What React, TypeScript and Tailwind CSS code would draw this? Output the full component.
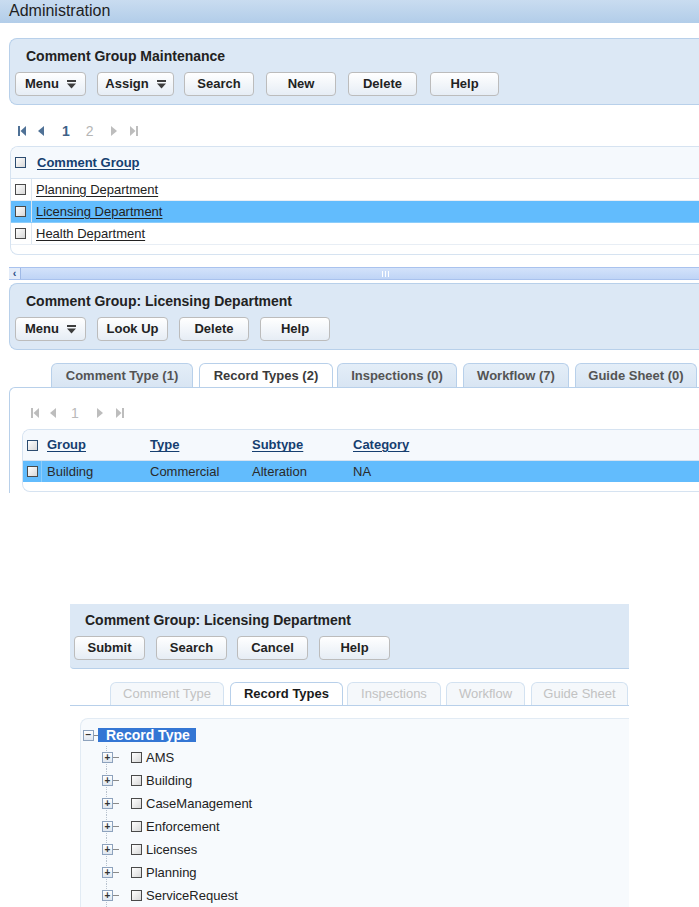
import React from "react";

function MenuGlyph() {
  return (
    <svg width="9" height="9" viewBox="0 0 9 9">
      <rect x="0" y="0" width="9" height="2" fill="#3d3d3d" />
      <polygon points="0,3.5 9,3.5 4.5,8.5" fill="#3d3d3d" />
    </svg>
  );
}

function Btn({ label, w, menu }: { label: string; w: string; menu?: boolean }) {
  return (
    <div
      className={`${w} h-[24px] flex items-center justify-center gap-[8px] rounded-[4px] border border-[#bcbcbc] bg-linear-to-b from-white to-[#e6edf5] text-[13px] font-bold text-[#222]`}
    >
      <span>{label}</span>
      {menu && <MenuGlyph />}
    </div>
  );
}

function Check({ blue }: { blue?: boolean }) {
  return (
    <span
      className={`block w-[11px] h-[11px] border ${blue ? "border-[#2c4c70]" : "border-[#4a4a4a]"} bg-linear-to-br from-white to-[#d8d8d8]`}
    />
  );
}

function PagerIcon({ kind, color }: { kind: "first" | "prev" | "next" | "last"; color: string }) {
  return (
    <svg width="8" height="10" viewBox="0 0 8 10">
      {kind === "first" && (
        <>
          <rect x="0" y="0" width="2" height="10" fill={color} />
          <polygon points="8,0 8,10 2.5,5" fill={color} />
        </>
      )}
      {kind === "prev" && <polygon points="7,0 7,10 1,5" fill={color} />}
      {kind === "next" && <polygon points="1,0 1,10 7,5" fill={color} />}
      {kind === "last" && (
        <>
          <polygon points="0,0 0,10 5.5,5" fill={color} />
          <rect x="6" y="0" width="2" height="10" fill={color} />
        </>
      )}
    </svg>
  );
}

function Panel({
  title,
  children,
}: {
  title: string;
  children: React.ReactNode;
}) {
  return (
    <div className="ml-[9px] h-[67px] bg-[#dce8f5] border border-r-0 border-[#b8d0ea] rounded-l-[8px]">
      <div className="pl-[16px] pt-[9px] text-[14px] leading-[16px] font-bold text-[#222]">{title}</div>
      <div className="flex mt-[8px] pl-[5px]">{children}</div>
    </div>
  );
}

function Tab({ label, w, active }: { label: string; w: string; active?: boolean }) {
  return (
    <div
      className={`${w} h-[24px] flex items-center justify-center rounded-t-[6px] border border-b-0 border-[#b8d0ea] text-[13px] font-bold ${
        active ? "bg-white text-[#3a3a3a]" : "bg-linear-to-b from-[#e4eef8] to-[#d8e5f3] text-[#545454]"
      }`}
    >
      {label}
    </div>
  );
}

function Tab2({ label, w, active }: { label: string; w: string; active?: boolean }) {
  return (
    <div
      className={`${w} h-[23px] flex items-center justify-center rounded-t-[6px] border border-b-0 text-[13px] ${
        active
          ? "bg-white border-[#b8d0ea] font-bold text-[#1a1a1a]"
          : "bg-[#f5f8fb] border-[#d3e2f1] text-[#c2c2c2]"
      }`}
    >
      {label}
    </div>
  );
}

function PlusBox({ minus }: { minus?: boolean }) {
  return (
    <span className="relative flex items-center justify-center w-[11px] h-[11px] border border-[#8da2bd] bg-linear-to-b from-white to-[#dfe6ef] text-[10px] leading-none font-bold text-[#333]">
      {minus ? "−" : "+"}
    </span>
  );
}

const groups = ["Planning Department", "Licensing Department", "Health Department"];
const recordTypes = ["AMS", "Building", "CaseManagement", "Enforcement", "Licenses", "Planning", "ServiceRequest"];

export default function App() {
  return (
    <div className="w-[699px] min-h-[907px] overflow-hidden bg-white font-['Liberation_Sans',Arial,sans-serif] text-[#222]">
      {/* page header */}
      <div className="h-[23px] bg-linear-to-b from-[#c9dcf0] to-[#b2cde9] pl-[9px] text-[16px] leading-[21px] text-[#1e1e1e]">
        Administration
      </div>

      <div className="h-[15px]" />

      <Panel title="Comment Group Maintenance">
        <Btn label="Menu" w="w-[71px]" menu />
        <div className="ml-[11px]"><Btn label="Assign" w="w-[77px]" menu /></div>
        <div className="ml-[10px]"><Btn label="Search" w="w-[70px]" /></div>
        <div className="ml-[12px]"><Btn label="New" w="w-[70px]" /></div>
        <div className="ml-[12px]"><Btn label="Delete" w="w-[69px]" /></div>
        <div className="ml-[13px]"><Btn label="Help" w="w-[69px]" /></div>
      </Panel>

      {/* pager */}
      <div className="flex items-center h-[14px] mt-[19px] mb-[8px] pl-[18px] text-[14px] font-bold">
        <PagerIcon kind="first" color="#4f7196" />
        <span className="ml-[11px]"><PagerIcon kind="prev" color="#4f7196" /></span>
        <span className="ml-[17px] text-[#3d6187]">1</span>
        <span className="ml-[16px] text-[#b5b5b5] font-normal">2</span>
        <span className="ml-[16px]"><PagerIcon kind="next" color="#bdbdbd" /></span>
        <span className="ml-[12px]"><PagerIcon kind="last" color="#bdbdbd" /></span>
      </div>

      {/* comment group table */}
      <div className="ml-[10px] border border-r-0 border-[#d6e3f1] rounded-l-[8px] overflow-hidden">
        <div className="h-[32px] bg-[#f5f9fd] border-b border-[#d6e3f1] flex items-center">
          <div className="w-[21px] pl-[4px]"><Check blue /></div>
          <div className="pl-[5px] text-[13px] font-bold text-[#163f70] underline underline-offset-2">Comment Group</div>
        </div>
        {groups.map((g) => (
          <div
            key={g}
            className={`h-[22px] flex border-b ${g === "Licensing Department" ? "bg-[#62bcfd] border-[#8ccdfb]" : "bg-white border-[#e8eef5]"}`}
          >
            <div className="w-[21px] pl-[4px] flex items-center border-r border-[#dce6f0]"><Check /></div>
            <div className="pl-[4px] flex items-center text-[13px] text-[#222] underline underline-offset-2">{g}</div>
          </div>
        ))}
        <div className="h-[9px]" />
      </div>

      <div className="h-[12px]" />

      {/* horizontal scrollbar */}
      <div className="ml-[9px] h-[13px] flex border-y border-[#a9c2ee]">
        <div className="w-[12px] flex items-center justify-center bg-[#e3ecf9] border-r border-[#9fb9e6] text-[11px] leading-none font-bold text-[#2a4d86]">‹</div>
        <div className="flex-1 flex items-center justify-center bg-linear-to-b from-[#d3e2fa] to-[#bfd4f6] pl-[50px]">
          <div className="flex gap-[2px]">
            <span className="w-px h-[6px] bg-white" />
            <span className="w-px h-[6px] bg-white" />
            <span className="w-px h-[6px] bg-white" />
          </div>
        </div>
      </div>

      <div className="h-[3px]" />

      <Panel title="Comment Group: Licensing Department">
        <Btn label="Menu" w="w-[71px]" menu />
        <div className="ml-[11px]"><Btn label="Look Up" w="w-[71px]" /></div>
        <div className="ml-[11px]"><Btn label="Delete" w="w-[70px]" /></div>
        <div className="ml-[11px]"><Btn label="Help" w="w-[70px]" /></div>
      </Panel>

      {/* tabs */}
      <div className="flex mt-[13px] pl-[51px]">
        <Tab label="Comment Type (1)" w="w-[142px]" />
        <div className="ml-[6px]"><Tab label="Record Types (2)" w="w-[134px]" active /></div>
        <div className="ml-[4px]"><Tab label="Inspections (0)" w="w-[120px]" /></div>
        <div className="ml-[6px]"><Tab label="Workflow (7)" w="w-[106px]" /></div>
        <div className="ml-[6px]"><Tab label="Guide Sheet (0)" w="w-[122px]" /></div>
      </div>

      <div className="ml-[9px] h-[106px] border-t border-l border-[#b8d0ea] rounded-tl-[6px]">
        <div className="flex items-center h-[14px] mt-[18px] pl-[21px] text-[14px] text-[#b9b9b9]">
          <PagerIcon kind="first" color="#bdbdbd" />
          <span className="ml-[10px]"><PagerIcon kind="prev" color="#bdbdbd" /></span>
          <span className="ml-[14px]">1</span>
          <span className="ml-[17px]"><PagerIcon kind="next" color="#bdbdbd" /></span>
          <span className="ml-[12px]"><PagerIcon kind="last" color="#bdbdbd" /></span>
        </div>

        <div className="ml-[12px] mt-[9px] border border-r-0 border-[#d6e3f1] rounded-l-[8px] overflow-hidden">
          <div className="h-[31px] bg-[#f5f9fd] border-b border-[#d6e3f1] flex items-center text-[13px] font-bold text-[#163f70]">
            <div className="w-[19px] pl-[4px]"><Check blue /></div>
            <div className="w-[108px] pl-[5px]"><span className="underline underline-offset-2">Group</span></div>
            <div className="w-[102px]"><span className="underline underline-offset-2">Type</span></div>
            <div className="w-[101px]"><span className="underline underline-offset-2">Subtype</span></div>
            <div><span className="underline underline-offset-2">Category</span></div>
          </div>
          <div className="h-[21px] flex items-center bg-[#62bcfd] text-[13px] text-[#2a2a2a]">
            <div className="w-[19px] h-full pl-[4px] flex items-center border-r border-[#8ccdfb]"><Check /></div>
            <div className="w-[108px] pl-[5px]">Building</div>
            <div className="w-[102px]">Commercial</div>
            <div className="w-[101px]">Alteration</div>
            <div>NA</div>
          </div>
          <div className="h-[9px]" />
        </div>
      </div>

      {/* edit form */}
      <div className="ml-[70px] mt-[111px] w-[559px] h-[65px] bg-[#dce8f5] border-b border-[#b8d0ea] rounded-bl-[4px]">
        <div className="pl-[15px] pt-[8px] text-[14px] leading-[16px] font-bold text-[#222]">Comment Group: Licensing Department</div>
        <div className="flex mt-[8px] pl-[4px]">
          <Btn label="Submit" w="w-[71px]" />
          <div className="ml-[11px]"><Btn label="Search" w="w-[71px]" /></div>
          <div className="ml-[10px]"><Btn label="Cancel" w="w-[71px]" /></div>
          <div className="ml-[11px]"><Btn label="Help" w="w-[71px]" /></div>
        </div>
      </div>

      <div className="ml-[70px] mt-[13px] w-[559px] flex pl-[40px] border-b border-[#b8d0ea]">
        <Tab2 label="Comment Type" w="w-[114px]" />
        <div className="ml-[6px]"><Tab2 label="Record Types" w="w-[113px]" active /></div>
        <div className="ml-[4px]"><Tab2 label="Inspections" w="w-[94px]" /></div>
        <div className="ml-[5px]"><Tab2 label="Workflow" w="w-[79px]" /></div>
        <div className="ml-[6px]"><Tab2 label="Guide Sheet" w="w-[97px]" /></div>
      </div>

      {/* record type tree */}
      <div className="ml-[80px] mt-[12px] w-[549px] h-[189px] bg-[#f7fafd] border-t border-l border-[#e2ebf4] rounded-tl-[8px] pt-[9px]">
        <div className="flex items-center h-[14px] pl-[2px]">
          <PlusBox minus />
          <span className="w-[4px] h-px bg-[#8a8a8a]" />
          <span className="w-[98px] h-[14px] bg-[#3476d4] pl-[8px] text-[14px] leading-[14px] font-bold text-white">Record Type</span>
        </div>
        <div className="mt-[4px] pl-[21px]">
          {recordTypes.map((r) => (
            <div key={r} className="h-[23px] flex items-center">
              <div className="relative h-full flex items-center">
                <span className="absolute inset-y-0 left-[4px] border-l border-dotted border-[#b9c3cf]" />
                <PlusBox />
              </div>
              <span className="w-[6px] h-px bg-[#8a8a8a]" />
              <span className="ml-[12px]"><Check /></span>
              <span className="ml-[4px] text-[13px] text-[#222]">{r}</span>
            </div>
          ))}
        </div>
      </div>
    </div>
  );
}
